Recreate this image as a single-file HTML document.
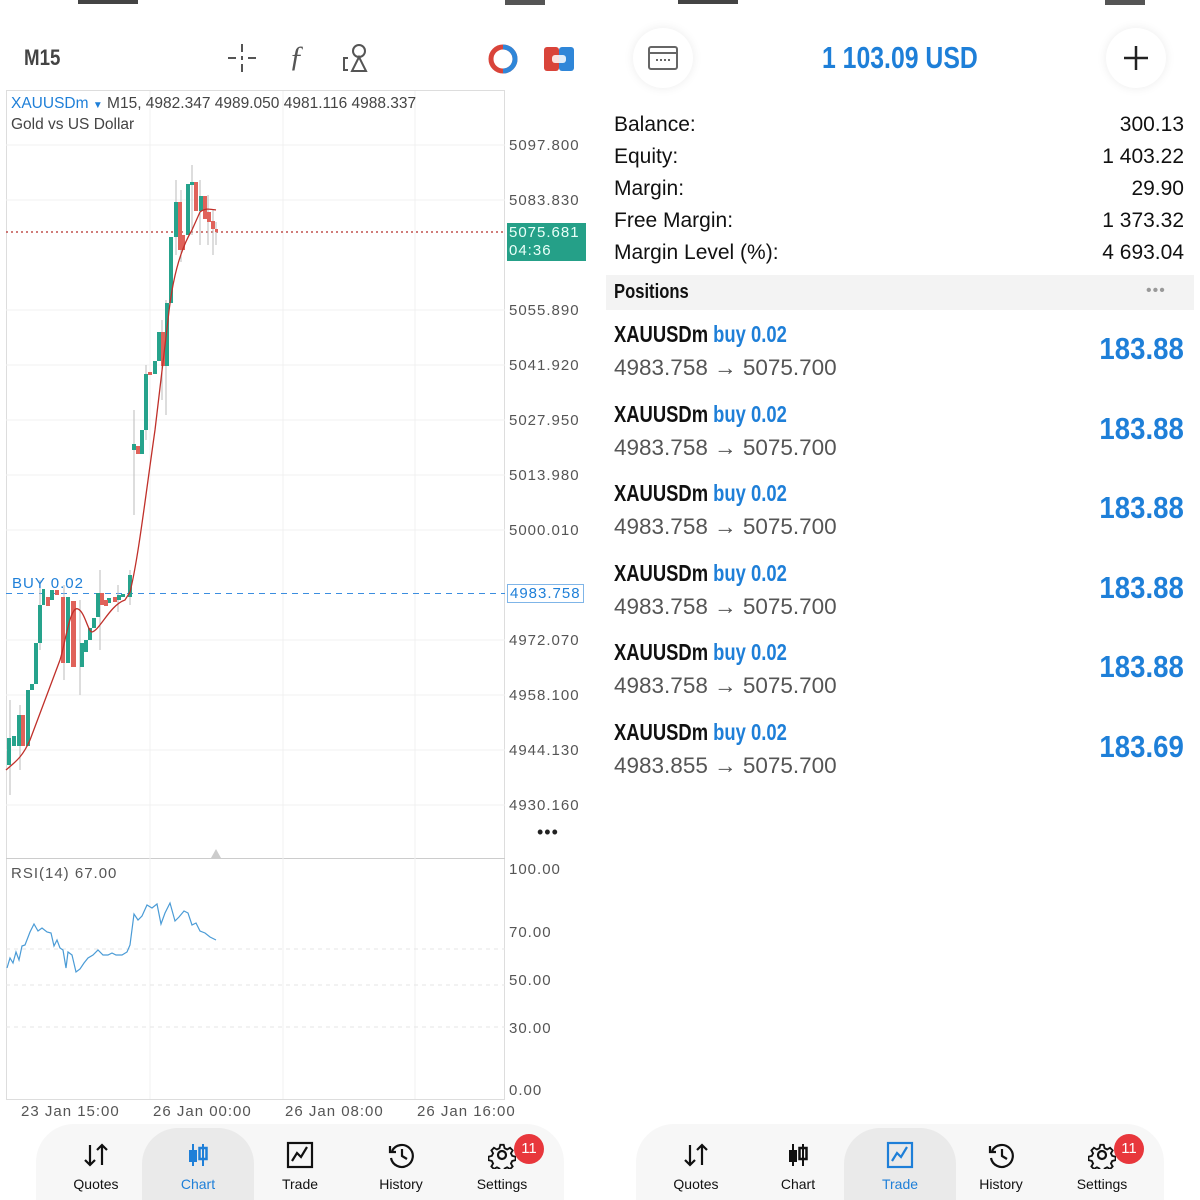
<!DOCTYPE html>
<html><head><meta charset="utf-8"><style>
*{margin:0;padding:0;box-sizing:border-box}
body{width:1200px;height:1200px;background:#fff;position:relative;overflow:hidden;font-family:"Liberation Sans",sans-serif;color:#222}
.a{position:absolute;white-space:nowrap}
.ax{font-size:15px;color:#555;letter-spacing:1px}
.lab{font-size:21px;color:#111}
.val{font-size:21px;color:#111;right:16px;text-align:right}
.sym{font-size:23px;font-weight:bold;color:#111;transform:scaleX(.8);transform-origin:0 0}
.sym span{color:#1e7fd8;font-weight:bold}
.pr{font-size:22.5px;color:#555}
.pl{font-size:31px;font-weight:bold;color:#1e7fd8;right:16px;transform:scaleX(.89);transform-origin:100% 0}
.nav{font-size:14px;color:#111;text-align:center;width:80px}
</style></head><body>

<div class="a" style="left:78px;top:0;width:60px;height:4px;background:#444"></div>
<div class="a" style="left:505px;top:0;width:40px;height:5px;background:#555"></div>
<div class="a" style="left:678px;top:0;width:60px;height:4px;background:#444"></div>
<div class="a" style="left:1105px;top:0;width:40px;height:5px;background:#555"></div>

<div class="a" style="left:24px;top:45px;font-size:22px;color:#444;font-weight:bold;transform:scaleX(.85);transform-origin:0 0">M15</div>
<svg class="a" style="left:226px;top:42px" width="32" height="32" viewBox="0 0 32 32" fill="none" stroke="#555" stroke-width="2"><path d="M16 2v8M16 14v4M16 22v8M2 16h8M22 16h8"/></svg>
<div class="a" style="left:289px;top:40px;font-size:30px;font-style:italic;color:#555;font-family:'Liberation Serif',serif">ƒ</div>
<svg class="a" style="left:340px;top:42px" width="32" height="32" viewBox="0 0 32 32" fill="none" stroke="#555" stroke-width="2"><circle cx="19" cy="9" r="6"/><path d="M19 15l-7 14h14z"/><path d="M8 16H4v12h4"/></svg>
<svg class="a" style="left:488px;top:44px" width="30" height="30" viewBox="0 0 30 30"><circle cx="15" cy="15" r="12" fill="none" stroke="#d9443a" stroke-width="5"/><path d="M15 3a12 12 0 0 1 0 24" fill="none" stroke="#2f86d8" stroke-width="5"/><path d="M14 9v7l3 3" stroke="#fff" stroke-width="2" fill="none"/></svg>
<svg class="a" style="left:544px;top:47px" width="30" height="24" viewBox="0 0 30 24"><rect x="0" y="0" width="15" height="24" rx="3" fill="#d9443a"/><rect x="15" y="0" width="15" height="24" rx="3" fill="#2f86d8"/><rect x="8" y="8" width="14" height="8" rx="3" fill="#fff" opacity=".85"/></svg>

<svg class="a" style="left:0;top:0" width="600" height="1125" viewBox="0 0 600 1125">
<rect x="6.5" y="90.5" width="498" height="1009" fill="#fff" stroke="#ddd"/>
<line x1="6" y1="858.5" x2="505" y2="858.5" stroke="#ccc"/>
<g stroke="#f1f1f1">
<line x1="150" y1="91" x2="150" y2="1099"/><line x1="283" y1="91" x2="283" y2="1099"/><line x1="415" y1="91" x2="415" y2="1099"/>
<line x1="6" y1="145" x2="505" y2="145"/><line x1="6" y1="200" x2="505" y2="200"/><line x1="6" y1="310" x2="505" y2="310"/><line x1="6" y1="365" x2="505" y2="365"/><line x1="6" y1="420" x2="505" y2="420"/><line x1="6" y1="475" x2="505" y2="475"/><line x1="6" y1="530" x2="505" y2="530"/><line x1="6" y1="640" x2="505" y2="640"/><line x1="6" y1="695" x2="505" y2="695"/><line x1="6" y1="750" x2="505" y2="750"/><line x1="6" y1="805" x2="505" y2="805"/>
</g>
<g stroke="#e6e6e6" stroke-dasharray="4 4"><line x1="6" y1="949" x2="505" y2="949"/><line x1="6" y1="985" x2="505" y2="985"/><line x1="6" y1="1027" x2="505" y2="1027"/></g>
<line x1="6" y1="232" x2="505" y2="232" stroke="#c0504d" stroke-dasharray="2 3" stroke-width="1.5"/>
<line x1="6" y1="593.5" x2="505" y2="593.5" stroke="#3b8ee0" stroke-dasharray="6 5"/>
<g stroke="#bbb" stroke-width="1">
<line x1="10" y1="700" x2="10" y2="795"/><line x1="20" y1="705" x2="20" y2="770"/><line x1="40" y1="580" x2="40" y2="650"/><line x1="64" y1="585" x2="64" y2="680"/><line x1="80" y1="600" x2="80" y2="695"/><line x1="100" y1="570" x2="100" y2="650"/><line x1="118" y1="585" x2="118" y2="612"/><line x1="130" y1="570" x2="130" y2="605"/><line x1="134" y1="410" x2="134" y2="515"/><line x1="146" y1="365" x2="146" y2="440"/><line x1="162" y1="320" x2="162" y2="400"/><line x1="166" y1="300" x2="166" y2="415"/><line x1="176" y1="180" x2="176" y2="255"/><line x1="181" y1="190" x2="181" y2="262"/><line x1="192" y1="165" x2="192" y2="235"/><line x1="200" y1="180" x2="200" y2="245"/><line x1="208" y1="195" x2="208" y2="245"/><line x1="213" y1="210" x2="213" y2="255"/><line x1="216" y1="222" x2="216" y2="245"/>
</g>
<g fill="#26a38c">
<rect x="7" y="738" width="4" height="27"/><rect x="12" y="736" width="4" height="10"/><rect x="17" y="715" width="4" height="31"/><rect x="26" y="690" width="4" height="56"/><rect x="30" y="684" width="4" height="6"/><rect x="34" y="643" width="4" height="41"/><rect x="38" y="605" width="4" height="38"/><rect x="42" y="589" width="3" height="16"/><rect x="50" y="590" width="4" height="10"/><rect x="66" y="597" width="4" height="66"/><rect x="80" y="643" width="4" height="24"/><rect x="84" y="640" width="4" height="12"/><rect x="88" y="628" width="4" height="12"/><rect x="92" y="618" width="4" height="10"/><rect x="96" y="593" width="4" height="24"/><rect x="107" y="598" width="4" height="5"/><rect x="117" y="595" width="4" height="5"/><rect x="121" y="594" width="4" height="3"/><rect x="128" y="575" width="4" height="22"/>
<rect x="132" y="444" width="4" height="6"/><rect x="140" y="430" width="4" height="24"/><rect x="144" y="374" width="4" height="56"/><rect x="153" y="361" width="4" height="13"/><rect x="157" y="332" width="4" height="29"/><rect x="165" y="303" width="4" height="63"/><rect x="169" y="237" width="4" height="66"/><rect x="174" y="202" width="4" height="35"/><rect x="186" y="184" width="4" height="51"/><rect x="190" y="182" width="4" height="3"/><rect x="199" y="196" width="4" height="15"/>
</g>
<g fill="#e0625a">
<rect x="21" y="715" width="4" height="31"/><rect x="46" y="597" width="4" height="9"/><rect x="55" y="590" width="4" height="5"/><rect x="61" y="597" width="4" height="66"/><rect x="71" y="601" width="5" height="66"/><rect x="100" y="593" width="4" height="12"/><rect x="104" y="600" width="4" height="6"/><rect x="113" y="597" width="4" height="5"/>
<rect x="136" y="446" width="4" height="8"/><rect x="148" y="372" width="4" height="3"/><rect x="161" y="332" width="4" height="34"/><rect x="178" y="202" width="4" height="48"/><rect x="182" y="235" width="3" height="15"/><rect x="194" y="182" width="4" height="29"/><rect x="203" y="196" width="4" height="23"/><rect x="207" y="212" width="4" height="10"/><rect x="211" y="221" width="4" height="8"/><rect x="215" y="229" width="3" height="3"/>
</g>
<path d="M6 770 C15 762 22 758 30 740 L45 700 L60 660 C65 645 70 605 78 609 C85 612 88 632 92 632 C100 630 110 605 125 600 L130 592 C138 560 145 500 155 430 L168 320 C172 280 180 250 192 230 L200 212 C205 208 210 209 216 210" fill="none" stroke="#c0302a" stroke-width="1.3"/>
<path d="M7 968 L10 958 L13 963 L16 952 L19 960 L22 946 L25 945 L30 932 L34 924 L38 931 L42 928 L47 932 L51 933 L54 946 L57 940 L60 948 L63 950 L66 968 L68 952 L72 955 L76 972 L80 969 L84 963 L88 958 L93 955 L98 950 L103 955 L108 955 L112 953 L116 955 L122 955 L127 952 L130 945 L134 914 L138 920 L142 916 L147 905 L152 908 L157 904 L161 924 L165 913 L170 903 L175 921 L179 917 L184 911 L188 913 L192 925 L196 923 L200 931 L205 933 L210 937 L216 940" fill="none" stroke="#4a9bd6" stroke-width="1.2"/>
<path d="M211 858 L216 849 L221 858 Z" fill="#ccc"/>
</svg>
<div class="a" style="left:11px;top:95px;font-size:15.5px;color:#444"><span style="color:#1e7fd8">XAUUSDm</span> <span style="color:#1e7fd8;font-size:10px">▼</span> M15, 4982.347 4989.050 4981.116 4988.337</div>
<div class="a" style="left:11px;top:116px;font-size:15.5px;color:#444">Gold vs US Dollar</div>
<div class="a ax" style="left:509px;top:137px">5097.800</div>
<div class="a ax" style="left:509px;top:192px">5083.830</div>
<div class="a ax" style="left:507px;top:223px;background:#25a088;color:#e8fff8;width:79px;height:38px;padding:1px 2px;line-height:18px">5075.681<br>04:36</div>
<div class="a ax" style="left:509px;top:302px">5055.890</div>
<div class="a ax" style="left:509px;top:357px">5041.920</div>
<div class="a ax" style="left:509px;top:412px">5027.950</div>
<div class="a ax" style="left:509px;top:467px">5013.980</div>
<div class="a ax" style="left:509px;top:522px">5000.010</div>
<div class="a ax" style="left:507px;top:584px;color:#1e7fd8;border:1px solid #7fb5e8;background:#fff;padding:0 2px;line-height:17px">4983.758</div>
<div class="a ax" style="left:509px;top:632px">4972.070</div>
<div class="a ax" style="left:509px;top:687px">4958.100</div>
<div class="a ax" style="left:509px;top:742px">4944.130</div>
<div class="a ax" style="left:509px;top:797px">4930.160</div>
<div class="a" style="left:537px;top:822px;font-size:18px;color:#222;letter-spacing:1px">•••</div>
<div class="a" style="left:12px;top:575px;font-size:15px;color:#1e7fd8;letter-spacing:1px">BUY 0.02</div>
<div class="a ax" style="left:11px;top:865px">RSI(14) 67.00</div>
<div class="a ax" style="left:509px;top:861px">100.00</div>
<div class="a ax" style="left:509px;top:924px">70.00</div>
<div class="a ax" style="left:509px;top:972px">50.00</div>
<div class="a ax" style="left:509px;top:1020px">30.00</div>
<div class="a ax" style="left:509px;top:1082px">0.00</div>
<div class="a ax" style="left:21px;top:1103px">23 Jan 15:00</div>
<div class="a ax" style="left:153px;top:1103px">26 Jan 00:00</div>
<div class="a ax" style="left:285px;top:1103px">26 Jan 08:00</div>
<div class="a ax" style="left:417px;top:1103px">26 Jan 16:00</div>

<div class="a" style="left:633px;top:28px;width:60px;height:60px;border-radius:50%;background:#fff;box-shadow:0 0 10px rgba(0,0,0,.08)"></div>
<svg class="a" style="left:648px;top:46px" width="30" height="24" viewBox="0 0 30 24" fill="none" stroke="#666" stroke-width="2"><rect x="1" y="1" width="28" height="22" rx="2"/><line x1="1" y1="7" x2="29" y2="7"/><path d="M8 14h2M12 14h2M16 14h2M20 14h2" /></svg>
<div class="a" style="left:1106px;top:28px;width:60px;height:60px;border-radius:50%;background:#fff;box-shadow:0 0 10px rgba(0,0,0,.08)"></div>
<svg class="a" style="left:1122px;top:44px" width="28" height="28" viewBox="0 0 28 28" stroke="#222" stroke-width="2.5"><path d="M14 2v24M2 14h24"/></svg>
<div class="a" style="left:822px;top:40px;font-size:31px;font-weight:bold;color:#1e7fd8;transform:scaleX(.8);transform-origin:0 0">1 103.09 USD</div>

<div class="a lab" style="left:614px;top:113px">Balance:</div><div class="a val" style="top:113px">300.13</div>
<div class="a lab" style="left:614px;top:145px">Equity:</div><div class="a val" style="top:145px">1 403.22</div>
<div class="a lab" style="left:614px;top:177px">Margin:</div><div class="a val" style="top:177px">29.90</div>
<div class="a lab" style="left:614px;top:209px">Free Margin:</div><div class="a val" style="top:209px">1 373.32</div>
<div class="a lab" style="left:614px;top:241px">Margin Level (%):</div><div class="a val" style="top:241px">4 693.04</div>
<div class="a" style="left:606px;top:275px;width:588px;height:35px;background:#f3f3f3"></div>
<div class="a" style="left:614px;top:281px;font-size:20px;font-weight:bold;color:#111;transform:scaleX(.83);transform-origin:0 0">Positions</div>
<div class="a" style="left:1146px;top:282px;font-size:16px;color:#999;letter-spacing:1px">•••</div>

<div class="a sym" style="left:614px;top:321px">XAUUSDm <span>buy 0.02</span></div><div class="a pr" style="left:614px;top:355px">4983.758 → 5075.700</div><div class="a pl" style="top:331px">183.88</div>
<div class="a sym" style="left:614px;top:401px">XAUUSDm <span>buy 0.02</span></div><div class="a pr" style="left:614px;top:435px">4983.758 → 5075.700</div><div class="a pl" style="top:411px">183.88</div>
<div class="a sym" style="left:614px;top:480px">XAUUSDm <span>buy 0.02</span></div><div class="a pr" style="left:614px;top:514px">4983.758 → 5075.700</div><div class="a pl" style="top:490px">183.88</div>
<div class="a sym" style="left:614px;top:560px">XAUUSDm <span>buy 0.02</span></div><div class="a pr" style="left:614px;top:594px">4983.758 → 5075.700</div><div class="a pl" style="top:570px">183.88</div>
<div class="a sym" style="left:614px;top:639px">XAUUSDm <span>buy 0.02</span></div><div class="a pr" style="left:614px;top:673px">4983.758 → 5075.700</div><div class="a pl" style="top:649px">183.88</div>
<div class="a sym" style="left:614px;top:719px">XAUUSDm <span>buy 0.02</span></div><div class="a pr" style="left:614px;top:753px">4983.855 → 5075.700</div><div class="a pl" style="top:729px">183.69</div>

<div class="a" style="left:36px;top:1124px;width:528px;height:76px;border-radius:38px 38px 0 0;background:#f7f7f7"></div>
<div class="a" style="left:142px;top:1128px;width:112px;height:72px;border-radius:36px 36px 0 0;background:#eaeaea"></div>
<div class="a" style="left:636px;top:1124px;width:528px;height:76px;border-radius:38px 38px 0 0;background:#f7f7f7"></div>
<div class="a" style="left:844px;top:1128px;width:112px;height:72px;border-radius:36px 36px 0 0;background:#eaeaea"></div>

<svg width="0" height="0" style="position:absolute"><defs>
<g id="iq" fill="none" stroke="#111" stroke-width="2.2"><path d="M8 4v20M3 19l5 5 5-5M20 24V4M15 9l5-5 5 5"/></g>
<g id="ic"><path d="M9 3v22M19 3v22" stroke="currentColor" stroke-width="2"/><rect x="5" y="9" width="8" height="12" fill="currentColor"/><rect x="15.5" y="7" width="7" height="11" fill="none" stroke="currentColor" stroke-width="2.5"/></g>
<g id="it" fill="none" stroke="currentColor" stroke-width="2.2"><rect x="2" y="2" width="24" height="24"/><path d="M6 20l5-8 4 4 6-10"/></g>
<g id="ih" fill="none" stroke="#111" stroke-width="2.2"><path d="M5 10a11 11 0 1 1 -1 7"/><path d="M3 5v6h6"/><path d="M15 8v7l5 3"/></g>
<g id="is" fill="none" stroke="#111" stroke-width="2.2"><circle cx="14" cy="14" r="4"/><path d="M12 2h4l1 4 3 1.5 3.5-2 3 3-2 3.5 1.5 3 4 1v4l-4 1-1.5 3 2 3.5-3 3-3.5-2-3 1.5-1 4h-4l-1-4-3-1.5-3.5 2-3-3 2-3.5-1.5-3-4-1v-4l4-1 1.5-3-2-3.5 3-3 3.5 2 3-1.5z" transform="scale(.85) translate(2.5 2.5)"/></g>
</defs></svg>

<svg class="a" style="left:82px;top:1141px;color:#111" width="28" height="28"><use href="#iq"/></svg>
<svg class="a" style="left:184px;top:1141px;color:#1e7fd8" width="28" height="28"><use href="#ic"/></svg>
<svg class="a" style="left:286px;top:1141px;color:#111" width="28" height="28"><use href="#it"/></svg>
<svg class="a" style="left:387px;top:1141px" width="28" height="28"><use href="#ih"/></svg>
<svg class="a" style="left:488px;top:1141px" width="28" height="28"><use href="#is"/></svg>
<div class="a" style="left:514px;top:1134px;width:30px;height:30px;border-radius:50%;background:#e8373c;color:#fff;font-size:15px;text-align:center;line-height:30px">11</div>
<div class="a nav" style="left:56px;top:1176px">Quotes</div>
<div class="a nav" style="left:158px;top:1176px;color:#1e7fd8">Chart</div>
<div class="a nav" style="left:260px;top:1176px">Trade</div>
<div class="a nav" style="left:361px;top:1176px">History</div>
<div class="a nav" style="left:462px;top:1176px">Settings</div>

<svg class="a" style="left:682px;top:1141px" width="28" height="28"><use href="#iq"/></svg>
<svg class="a" style="left:784px;top:1141px;color:#111" width="28" height="28"><use href="#ic"/></svg>
<svg class="a" style="left:886px;top:1141px;color:#1e7fd8" width="28" height="28"><use href="#it"/></svg>
<svg class="a" style="left:987px;top:1141px" width="28" height="28"><use href="#ih"/></svg>
<svg class="a" style="left:1088px;top:1141px" width="28" height="28"><use href="#is"/></svg>
<div class="a" style="left:1114px;top:1134px;width:30px;height:30px;border-radius:50%;background:#e8373c;color:#fff;font-size:15px;text-align:center;line-height:30px">11</div>
<div class="a nav" style="left:656px;top:1176px">Quotes</div>
<div class="a nav" style="left:758px;top:1176px">Chart</div>
<div class="a nav" style="left:860px;top:1176px;color:#1e7fd8">Trade</div>
<div class="a nav" style="left:961px;top:1176px">History</div>
<div class="a nav" style="left:1062px;top:1176px">Settings</div>
</body></html>
